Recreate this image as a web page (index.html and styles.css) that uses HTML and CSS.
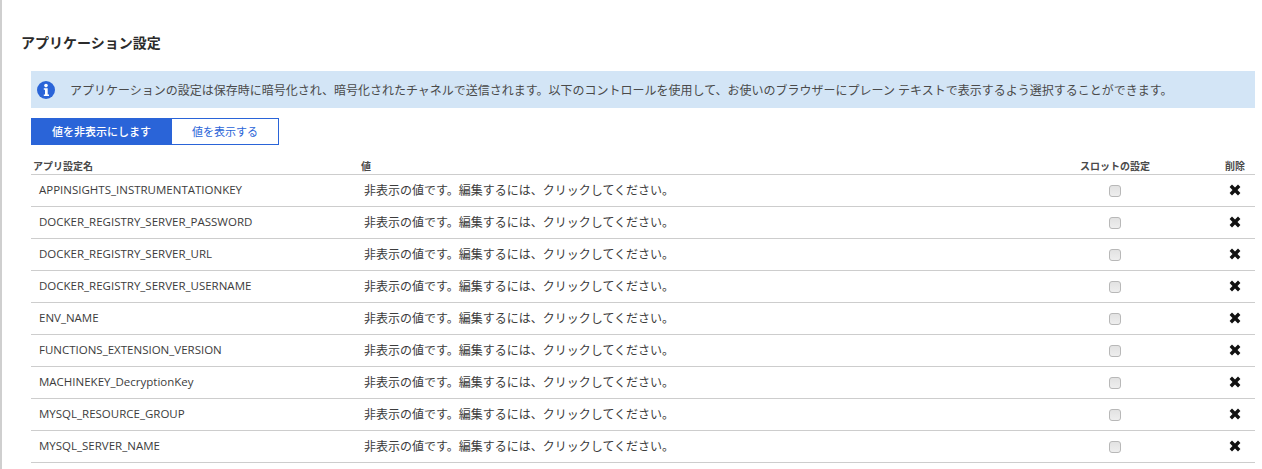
FILE: index.html
```html
<!DOCTYPE html>
<html lang="ja">
<head>
<meta charset="utf-8">
<title>アプリケーション設定</title>
<link rel="stylesheet" href="styles.css">
</head>
<body>
<main class="panel">
  <h2 class="title">アプリケーション設定</h2>
  <div class="content">
    <div class="banner">
      <svg class="info" width="18" height="18" viewBox="0 0 18 18"><circle cx="9" cy="9" r="9" fill="#2a64d8"/><circle cx="9" cy="4.6" r="1.8" fill="#fff"/><path d="M6.8 7.3h3.9v6.2h1.3v1.4H6.8v-1.4h1.2V8.7H6.8z" fill="#fff"/></svg>
      <span>アプリケーションの設定は保存時に暗号化され、暗号化されたチャネルで送信されます。以下のコントロールを使用して、お使いのブラウザーにプレーン テキストで表示するよう選択することができます。</span>
    </div>
    <div class="toggle">
      <div class="toggle-on">値を非表示にします</div>
      <div class="toggle-off">値を表示する</div>
    </div>
    <div class="row head">
      <div class="c-name">アプリ設定名</div>
      <div class="c-value">値</div>
      <div class="c-slot">スロットの設定</div>
      <div class="c-del">削除</div>
    </div>
    <div class="row"><div class="c-name">APPINSIGHTS_INSTRUMENTATIONKEY</div><div class="c-value">非表示の値です。編集するには、クリックしてください。</div><div class="c-slot"><span class="check"></span></div><div class="c-del"><svg class="x" viewBox="0 0 12 12"><path d="M3 .6 6 3.5 9 .6 11.4 3 8.5 6l2.9 3L9 11.4 6 8.5l-3 2.9L.6 9l2.9-3L.6 3z"/></svg></div></div>
    <div class="row"><div class="c-name">DOCKER_REGISTRY_SERVER_PASSWORD</div><div class="c-value">非表示の値です。編集するには、クリックしてください。</div><div class="c-slot"><span class="check"></span></div><div class="c-del"><svg class="x" viewBox="0 0 12 12"><path d="M3 .6 6 3.5 9 .6 11.4 3 8.5 6l2.9 3L9 11.4 6 8.5l-3 2.9L.6 9l2.9-3L.6 3z"/></svg></div></div>
    <div class="row"><div class="c-name">DOCKER_REGISTRY_SERVER_URL</div><div class="c-value">非表示の値です。編集するには、クリックしてください。</div><div class="c-slot"><span class="check"></span></div><div class="c-del"><svg class="x" viewBox="0 0 12 12"><path d="M3 .6 6 3.5 9 .6 11.4 3 8.5 6l2.9 3L9 11.4 6 8.5l-3 2.9L.6 9l2.9-3L.6 3z"/></svg></div></div>
    <div class="row"><div class="c-name">DOCKER_REGISTRY_SERVER_USERNAME</div><div class="c-value">非表示の値です。編集するには、クリックしてください。</div><div class="c-slot"><span class="check"></span></div><div class="c-del"><svg class="x" viewBox="0 0 12 12"><path d="M3 .6 6 3.5 9 .6 11.4 3 8.5 6l2.9 3L9 11.4 6 8.5l-3 2.9L.6 9l2.9-3L.6 3z"/></svg></div></div>
    <div class="row"><div class="c-name">ENV_NAME</div><div class="c-value">非表示の値です。編集するには、クリックしてください。</div><div class="c-slot"><span class="check"></span></div><div class="c-del"><svg class="x" viewBox="0 0 12 12"><path d="M3 .6 6 3.5 9 .6 11.4 3 8.5 6l2.9 3L9 11.4 6 8.5l-3 2.9L.6 9l2.9-3L.6 3z"/></svg></div></div>
    <div class="row"><div class="c-name">FUNCTIONS_EXTENSION_VERSION</div><div class="c-value">非表示の値です。編集するには、クリックしてください。</div><div class="c-slot"><span class="check"></span></div><div class="c-del"><svg class="x" viewBox="0 0 12 12"><path d="M3 .6 6 3.5 9 .6 11.4 3 8.5 6l2.9 3L9 11.4 6 8.5l-3 2.9L.6 9l2.9-3L.6 3z"/></svg></div></div>
    <div class="row"><div class="c-name">MACHINEKEY_DecryptionKey</div><div class="c-value">非表示の値です。編集するには、クリックしてください。</div><div class="c-slot"><span class="check"></span></div><div class="c-del"><svg class="x" viewBox="0 0 12 12"><path d="M3 .6 6 3.5 9 .6 11.4 3 8.5 6l2.9 3L9 11.4 6 8.5l-3 2.9L.6 9l2.9-3L.6 3z"/></svg></div></div>
    <div class="row"><div class="c-name">MYSQL_RESOURCE_GROUP</div><div class="c-value">非表示の値です。編集するには、クリックしてください。</div><div class="c-slot"><span class="check"></span></div><div class="c-del"><svg class="x" viewBox="0 0 12 12"><path d="M3 .6 6 3.5 9 .6 11.4 3 8.5 6l2.9 3L9 11.4 6 8.5l-3 2.9L.6 9l2.9-3L.6 3z"/></svg></div></div>
    <div class="row"><div class="c-name">MYSQL_SERVER_NAME</div><div class="c-value">非表示の値です。編集するには、クリックしてください。</div><div class="c-slot"><span class="check"></span></div><div class="c-del"><svg class="x" viewBox="0 0 12 12"><path d="M3 .6 6 3.5 9 .6 11.4 3 8.5 6l2.9 3L9 11.4 6 8.5l-3 2.9L.6 9l2.9-3L.6 3z"/></svg></div></div>
  </div>
</main>
</body>
</html>
```
FILE: styles.css
```css
html, body {
  margin: 0;
  padding: 0;
  background: #fff;
  height: 469px;
  overflow: hidden;
}
body {
  font-family: "Open Sans", "Noto Sans CJK JP", sans-serif;
  font-size: 12px;
  color: #3c3c3c;
}
.panel {
  border-left: 2px solid #cfcfcf;
  height: 469px;
  box-sizing: border-box;
}
.title {
  margin: 0;
  padding: 33px 0 0 19px;
  height: 71px;
  box-sizing: border-box;
  font-size: 14px;
  line-height: 20px;
  font-weight: 700;
  color: #2b2b2b;
}
.content {
  margin: 0 7px 0 29px;
}
.banner {
  height: 37px;
  background: #d3e5f6;
  display: flex;
  align-items: center;
  padding-left: 6px;
  gap: 15px;
  color: #4a4a4a;
  white-space: nowrap;
}
.info { flex: none; }
.toggle {
  display: flex;
  width: 248px;
  height: 27px;
  margin-top: 10px;
  line-height: 25px;
  font-size: 11px;
  text-align: center;
  box-sizing: border-box;
}
.toggle-on {
  width: 141px;
  background: #2a64d8;
  color: #fff;
  line-height: 27px;
  font-weight: 500;
}
.toggle-off {
  width: 107px;
  box-sizing: border-box;
  border: 1px solid #2a64d8;
  border-left: 0;
  color: #2a64d8;
}
.row {
  display: flex;
  align-items: center;
  height: 32px;
  box-sizing: border-box;
  border-bottom: 1px solid #cdcdcd;
  padding-bottom: 2px;
  color: #3c3c3c;
  font-size: 12px;
}
.head {
  height: 30px;
  align-items: flex-end;
  padding-bottom: 1px;
  font-size: 10px;
  font-weight: 700;
  color: #4a4a4a;
  line-height: 14px;
}
.c-name {
  width: 333px;
  padding-left: 8px;
  box-sizing: border-box;
  white-space: nowrap;
  font-size: 11.5px;
}
.c-value {
  width: 700px;
  box-sizing: border-box;
  white-space: nowrap;
}
.head .c-name { padding-left: 2px; font-size: 10px; width: 330px; }
.head .c-value { width: 703px; }
.c-slot {
  width: 102px;
  flex: none;
  display: flex;
  justify-content: center;
}
.c-del {
  width: 40px;
  margin-left: auto;
  display: flex;
  justify-content: center;
}
.check {
  display: block;
  width: 12px;
  height: 12px;
  margin-top: 3px;
  box-sizing: border-box;
  background: linear-gradient(#e2e2e2, #eeeeee);
  border: 1px solid #b8b8b8;
  border-radius: 3px;
}
.x { width: 12px; height: 12px; fill: #111; display: block; }
```
